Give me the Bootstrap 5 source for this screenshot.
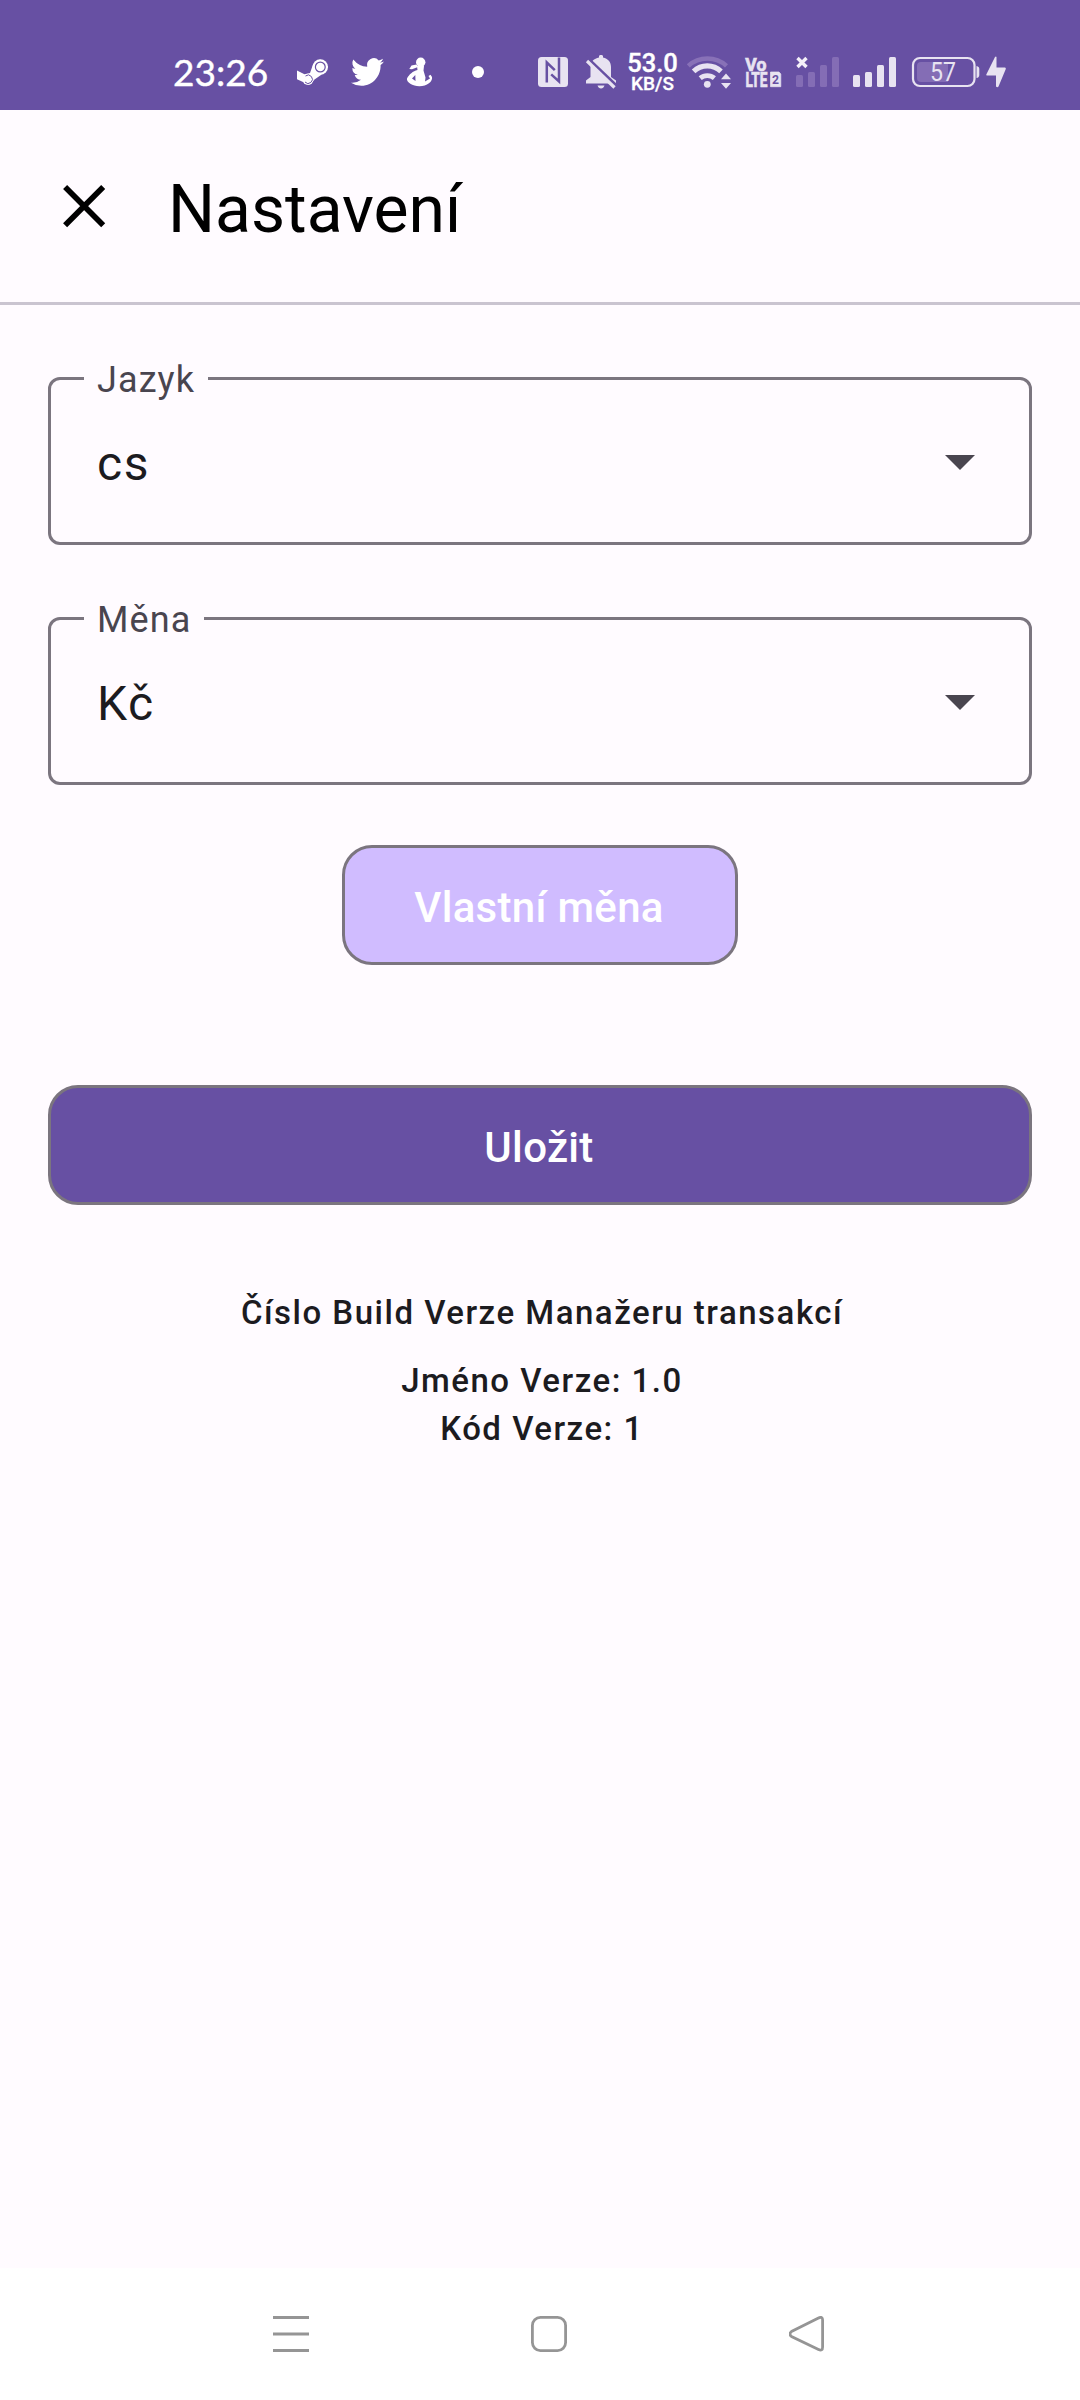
<!DOCTYPE html>
<html lang="cs">
<head>
<meta charset="utf-8">
<meta name="viewport" content="width=device-width, initial-scale=1">
<title>Nastavení</title>
<link href="https://cdn.jsdelivr.net/npm/bootstrap@5.3.0/dist/css/bootstrap.min.css" rel="stylesheet">
<style>
  :root { --violet: #6750a3; --outline: #7b757f; --ink: #1c1b1f; }
  body { background: #fffbff; color: var(--ink); font-family: Roboto, sans-serif; width: 1080px; height: 2400px; overflow: hidden; }
  svg { display: block; flex: none; }
  .status-bar { height: 110px; background: var(--violet); padding: 0 0 8px 173px; }
  .clock { width: 117px; height: 60px; font: 400 37px/60px Lato, sans-serif; -webkit-text-stroke: .4px #fff; }
  .net-speed { width: 54px; height: 60px; padding: 10px 0 0 1px; font-weight: 500; }
  .net-speed .rate { font-size: 25.5px; line-height: 23px; -webkit-text-stroke: .4px #fff; }
  .net-speed .unit { font-size: 19px; line-height: 18px; -webkit-text-stroke: .3px #fff; }
  .top-bar { height: 195px; border-bottom: 3px solid #cac4d0; padding: 0 48px; color: #000; }
  .top-bar h1 { font-size: 66px; font-weight: 400; line-height: 84px; margin-left: 48px; padding-top: 7px; }
  .content { padding: 72px 48px 0; }
  .outlined { height: 168px; border: 3px solid var(--outline); border-radius: 12px; padding: 2px 54px 0 46px; margin-bottom: 72px; }
  .outlined label { left: 33px; top: -24px; padding: 0 12.5px 0 13px; background: #fffbff; color: #49454f; font-size: 36px; line-height: 48px; letter-spacing: 1.1px; }
  .outlined .value { font-size: 48px; line-height: 72px; letter-spacing: 1.5px; padding-top: 4px; }
  .btn-app { height: 120px; border: 3px solid var(--outline); border-radius: 30px; color: #fff; font-size: 42px; font-weight: 500; line-height: 60px; letter-spacing: .3px; padding: 5px 70px 0 68px; }
  .btn-currency { background: #d0bcff; width: 396px; margin-top: -12px; white-space: nowrap; }
  .btn-save { background: var(--violet); margin-top: 120px; }
  .build { margin-top: 84px; padding-left: 4px; font-size: 33px; font-weight: 500; line-height: 48px; letter-spacing: 1.5px; }
  .build p { margin: 0; }
  .sys-nav { height: 132px; background: #fff; padding: 0 0 0 273px; gap: 222px; }
</style>
</head>
<body class="d-flex flex-column">
<header class="status-bar d-flex align-items-end text-white">
  <div class="clock">23:26</div>
  <svg width="50" height="60" viewBox="290 42 50 60"><path d="M297 70.6L304.5 74.2 310 73 313 64.500 320 59.500 328 66.700 321 75 314.500 79.500 310 84.500 303 82 297 79.300Z" fill="#fff"/><circle cx="320.300" cy="67" r="7.700" fill="#fff"/><circle cx="320.300" cy="67" r="4.900" fill="none" stroke="#6750a3" stroke-width="1.200"/><circle cx="308" cy="79.300" r="5.600" fill="#fff"/><path d="M305.500 76A4.200 4.200 0 1 1 305 82" fill="none" stroke="#6750a3" stroke-width="1"/></svg>
  <svg width="54" height="60" viewBox="340 42 54 60" fill="#fff"><path transform="translate(351 54) scale(2.060 2.120)" d="M5.026 15c6.038 0 9.341-5.003 9.341-9.334 0-.14 0-.282-.006-.422A6.685 6.685 0 0 0 16 3.542a6.658 6.658 0 0 1-1.889.518 3.301 3.301 0 0 0 1.447-1.817 6.533 6.533 0 0 1-2.087.793A3.286 3.286 0 0 0 7.875 6.03a9.325 9.325 0 0 1-6.767-3.429 3.289 3.289 0 0 0 1.018 4.382A3.323 3.323 0 0 1 .64 6.575v.045a3.288 3.288 0 0 0 2.632 3.218 3.203 3.203 0 0 1-.865.115 3.23 3.23 0 0 1-.614-.057 3.283 3.283 0 0 0 3.067 2.277A6.588 6.588 0 0 1 .78 13.58a6.32 6.32 0 0 1-.78-.045A9.344 9.344 0 0 0 5.026 15z"/></svg>
  <svg width="56" height="60" viewBox="394 42 56 60" fill="#fff"><circle cx="420.700" cy="62.300" r="4.700"/><path d="M416.500 64.500L411.500 65.500 409.300 69 412 69.300 418 67Z"/><path d="M417 66H424L423.500 70.500 425.500 77.500 425 81.500 430 78.500 428.500 76 430.500 74.800 432 77C433 81.500 427 86.200 419.500 86.200C413 86.300 406 82 407 78.500C409 74.500 413 71 417.500 70ZM415.300 75L412 78.500 415.500 81Z" fill-rule="evenodd"/></svg>
  <svg width="80" height="60" viewBox="450 42 80 60" fill="#fff"><circle cx="478" cy="72" r="6"/></svg>
  <!-- NFC -->
  <svg width="47" height="60" viewBox="530 42 47 60"><rect x="538" y="57" width="30" height="30" rx="3.500" fill="#e8e3f1"/><path d="M546.800 82.500V62.500L554.800 70.200M551.200 74.300L559 81.500V57.500" fill="none" stroke="#6750a3" stroke-width="2.500"/></svg>
  <!-- Silent mode -->
  <svg width="48" height="60" viewBox="577 42 48 60"><path d="M586 83.500V80.500L590.500 77V67C590.500 61.500 594 58.500 599 57.500V56C599 54.500 603 54.500 603 56V57.500C608 58.500 611 62 611 67V77L616 80.500V83.500Z" fill="#e8e3f1"/><path d="M597.500 85.500H604.500Q603.500 88.500 601 88.500T597.500 85.500Z" fill="#e8e3f1"/><path d="M585.500 56.500L617.500 87" stroke="#6750a3" stroke-width="3.600"/><path d="M587 61L614.500 87.500" stroke="#e8e3f1" stroke-width="3.200"/></svg>
  <div class="net-speed text-center"><div class="rate">53.0</div><div class="unit">KB/S</div></div>
  <!-- Wi-Fi -->
  <svg width="57" height="60" viewBox="679 42 57 60" fill="none" stroke="#e8e3f1"><path d="M688.300 65.800A28.500 28.500 0 0 1 726.500 65.800" stroke="#8871b7" stroke-width="4.500"/><path d="M693.600 71.300A20 20 0 0 1 721 71.300" stroke-width="5.200"/><path d="M700.200 78.200A11 11 0 0 1 714.400 78.200" stroke-width="4.800"/><circle cx="707.300" cy="84.300" r="3.400" fill="#e8e3f1" stroke="none"/><path d="M726 73.500L721 79.200H731ZM721 83H731L726 88.700Z" fill="#e8e3f1" stroke="none"/></svg>
  <svg width="52" height="60" viewBox="736 42 52 60" fill="#e8e3f1" stroke="#e8e3f1" stroke-width=".7" font-family="Roboto, sans-serif" font-weight="700"><text x="745.300" y="71" font-size="19" textLength="21" lengthAdjust="spacingAndGlyphs">Vo</text><text x="745.500" y="86.700" font-size="19.500" textLength="22" lengthAdjust="spacingAndGlyphs">LTE</text><path d="M770.500 72H779L780.800 74V86.700H770.500Z"/><text x="772" y="84" font-size="13" fill="#6750a3" stroke="none" textLength="7" lengthAdjust="spacingAndGlyphs">2</text></svg>
  <!-- SIM 1, no service -->
  <svg width="58" height="60" viewBox="788 42 58 60"><g fill="#846db5"><rect x="796" y="75" width="7" height="12" rx="1.500"/><rect x="808" y="72" width="7" height="15" rx="1.500"/><rect x="820" y="65" width="7" height="22" rx="1.500"/><rect x="832" y="57" width="7" height="30" rx="1.500"/></g><path d="M797.500 58L806.500 67M806.500 58L797.500 67" stroke="#f4f0f9" stroke-width="3.400"/></svg>
  <svg width="58" height="60" viewBox="846 42 58 60" fill="#e8e3f1"><rect x="853" y="75" width="7" height="12" rx="1.500"/><rect x="865" y="72" width="7" height="15" rx="1.500"/><rect x="877" y="65" width="7" height="22" rx="1.500"/><rect x="889" y="57" width="7" height="30" rx="1.500"/></svg>
  <!-- Battery -->
  <svg width="110" height="60" viewBox="904 42 110 60" fill="#e8e3f1"><rect x="913" y="58" width="61.500" height="28" rx="7" fill="none" stroke="#e8e3f1" stroke-width="2.200"/><path d="M921 62H948V82H921Q917 82 917 78V66Q917 62 921 62Z" fill="#846db5"/><path d="M976.500 66Q979.300 66.500 979.300 69V75Q979.300 77.500 976.500 78Z"/><text x="930" y="81" font-family="Roboto, sans-serif" font-size="25" textLength="26" lengthAdjust="spacingAndGlyphs">57</text><path d="M995 57L986.300 74.500Q986 75.500 987 75.500H996V86.500Q997.500 88 998.500 86.500L1005.800 69Q1006 67.500 1005 67.500H996.500V57Q996 56 995 57Z"/></svg>
</header>

<nav class="top-bar d-flex align-items-center">
  <svg width="72" height="72" viewBox="0 0 24 24" fill="none" stroke="#000" stroke-width="1.900"><path d="M5.700 5.700L18.400 18.400M18.400 5.700L5.700 18.400"/></svg>
  <h1 class="mb-0">Nastavení</h1>
</nav>

<main class="content flex-grow-1 d-flex flex-column">
  <div class="outlined position-relative d-flex align-items-center justify-content-between">
    <label class="position-absolute">Jazyk</label>
    <span class="value">cs</span>
    <svg width="30" height="15" viewBox="0 0 30 15"><path d="M0 0H30L15 15Z" fill="#49454f"/></svg>
  </div>
  <div class="outlined position-relative d-flex align-items-center justify-content-between">
    <label class="position-absolute">Měna</label>
    <span class="value">Kč</span>
    <svg width="30" height="15" viewBox="0 0 30 15"><path d="M0 0H30L15 15Z" fill="#49454f"/></svg>
  </div>
  <button type="button" class="btn btn-app btn-currency align-self-center">Vlastní měna</button>
  <button type="button" class="btn btn-app btn-save w-100">Uložit</button>
  <section class="build text-center">
    <p>Číslo Build Verze Manažeru transakcí</p>
    <p class="mt-3 pt-1">Jméno Verze: 1.0</p>
    <p>Kód Verze: 1</p>
  </section>
</main>

<footer class="sys-nav d-flex align-items-center">
  <svg width="36" height="36" viewBox="0 0 36 36" stroke="#959595" stroke-width="3"><path d="M0 1.500H36M0 18H36M0 34.500H36"/></svg>
  <svg width="36" height="36" viewBox="0 0 36 36" fill="none" stroke="#959595" stroke-width="2.800"><rect x="1.400" y="1.400" width="33.200" height="33.200" rx="8"/></svg>
  <svg width="36" height="36" viewBox="0 0 36 36" fill="none" stroke="#959595" stroke-width="2.800"><path d="M29.500 2Q33.600 0 33.600 4V31Q33.600 35.500 29.500 33.500L2.500 20.500Q-.5 18 2.500 15.500Z"/></svg>
</footer>
<script src="https://cdn.jsdelivr.net/npm/bootstrap@5.3.0/dist/js/bootstrap.bundle.min.js"></script>
</body>
</html>
